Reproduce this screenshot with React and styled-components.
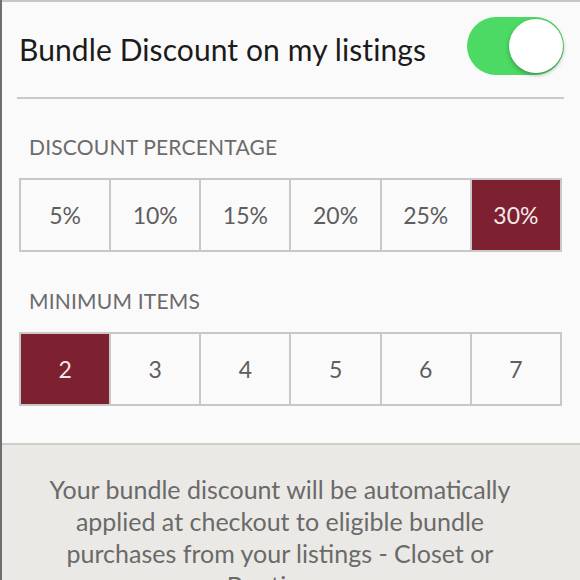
import React from "react";
import styled, { createGlobalStyle } from "styled-components";

const Global = createGlobalStyle`
  html, body { margin: 0; padding: 0; }
  body { width: 580px; height: 580px; overflow: hidden; background: #ebe9e5; font-family: Lato, "Open Sans", sans-serif; }
`;

const Page = styled.div`
  width: 580px;
  height: 580px;
  border-left: 2px solid #6f6f6f;
  box-sizing: border-box;
  display: flex;
  flex-direction: column;
  overflow: hidden;
`;

const Panel = styled.div`
  background: #fbfafa;
  border-top: 2px solid #c9c7c4;
  border-bottom: 2px solid #d0cecb;
  padding: 0 16px 0 15px;
  height: 445px;
  flex: none;
  box-sizing: border-box;
`;

const Header = styled.div`
  display: flex;
  align-items: center;
  justify-content: space-between;
  height: 95px;
  border-bottom: 2px solid #cbc9c7;
  padding-left: 2px;
`;

const Title = styled.div`
  font-size: 30px;
  color: #1b1b1b;
  letter-spacing: 0.1px;
  margin-top: -2px;
`;

const Toggle = styled.div`
  width: 97px;
  height: 58px;
  border-radius: 29px;
  background: #4cd964;
  position: relative;
  margin-top: -7px;
  margin-right: 0;
`;

const Knob = styled.div`
  position: absolute;
  top: 2px;
  right: 1px;
  width: 54px;
  height: 54px;
  border-radius: 50%;
  background: #fff;
  box-shadow: 0 2px 4px rgba(0, 0, 0, 0.3);
`;

const Label = styled.div`
  font-size: 21px;
  line-height: 25px;
  color: #6b6b6b;
  padding-left: 12px;
  margin-top: ${(p) => p.$top}px;
  margin-bottom: 19px;
  letter-spacing: 0.2px;
`;

const Grid = styled.div`
  display: grid;
  grid-template-columns: repeat(6, 1fr);
  margin-left: 2px;
  width: 543px;
  height: 74px;
  border: 1px solid #c8c8c8;
  box-sizing: border-box;
`;

const Cell = styled.div`
  display: flex;
  align-items: center;
  justify-content: center;
  font-size: 23px;
  color: ${(p) => (p.$on ? "#f4e9ea" : "#5e5e5e")};
  background: ${(p) => (p.$on ? "#7d2030" : "#fbfafa")};
  border: 1px solid #c8c8c8;
`;

const Footer = styled.div`
  flex: 1;
  background: #ebe9e5;
  padding: 28px 50px 0 28px;
  text-align: center;
  font-size: 25px;
  line-height: 32px;
  color: #6a6a6a;
`;

const percents = ["5%", "10%", "15%", "20%", "25%", "30%"];
const items = ["2", "3", "4", "5", "6", "7"];

export default function App() {
  return (
    <>
      <Global />
      <Page>
        <Panel>
          <Header>
            <Title>Bundle Discount on my listings</Title>
            <Toggle>
              <Knob />
            </Toggle>
          </Header>
          <Label $top={35}>DISCOUNT PERCENTAGE</Label>
          <Grid>
            {percents.map((p, i) => (
              <Cell key={p} $on={i === 5}>{p}</Cell>
            ))}
          </Grid>
          <Label $top={36}>MINIMUM ITEMS</Label>
          <Grid>
            {items.map((p, i) => (
              <Cell key={p} $on={i === 0}>{p}</Cell>
            ))}
          </Grid>
        </Panel>
        <Footer>
          Your bundle discount will be automatically applied at checkout to eligible bundle purchases from your listings - Closet or Boutique.
        </Footer>
      </Page>
    </>
  );
}
